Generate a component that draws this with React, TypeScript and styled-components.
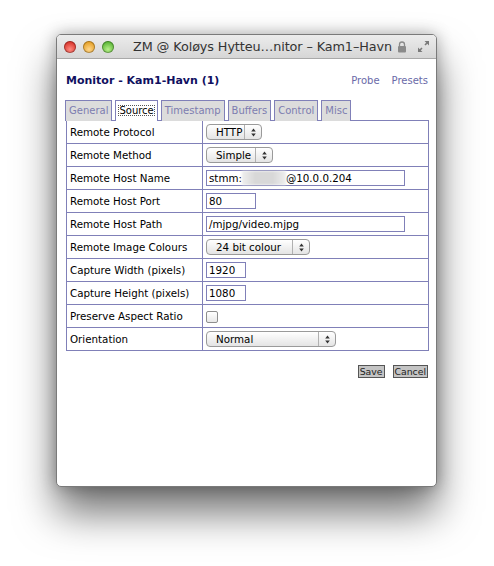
import React from "react";
import styled, { createGlobalStyle } from "styled-components";

const GlobalStyle = createGlobalStyle`
    html, body {
        margin: 0;
        padding: 0;
        background: #ffffff;
    }
`;

const Page = styled.div`
    width: 494px;
    height: 566px;
    padding: 34px 0 0 56px;
    box-sizing: border-box;
`;

const Window = styled.div`
    width: 381px;
    height: 453px;
    background: #ffffff;
    border: 1px solid #7a7a7a;
    border-radius: 5px;
    box-sizing: border-box;
    overflow: hidden;
    box-shadow: 0 26px 40px rgba(0, 0, 0, 0.55), 0 0 16px rgba(0, 0, 0, 0.3);
    display: flex;
    flex-direction: column;
`;

const TitleBar = styled.div`
    height: 23px;
    flex: none;
    display: flex;
    align-items: center;
    padding: 0 6px 0 7px;
    background: linear-gradient(#ececec, #d6d6d6);
    border-bottom: 1px solid #a9a9a9;
    font-family: "DejaVu Sans", sans-serif;
    font-size: 12.8px;
    color: #333;
`;

const Lights = styled.div`
    display: flex;
    gap: 7px;
`;

const Light = styled.span<{ $c: string; $d: string }>`
    width: 12px;
    height: 12px;
    border-radius: 50%;
    background: radial-gradient(circle at 50% 70%, ${p => p.$c} 0%, ${p => p.$d} 80%);
    box-shadow: inset 0 0 0 1px rgba(0, 0, 0, 0.28);
`;

const Title = styled.div`
    flex: 1;
    text-align: center;
    margin-left: 14px;
    white-space: nowrap;
    letter-spacing: -0.1px;
`;

const Content = styled.div`
    padding: 15px 8px 0 9px;
    font-family: "DejaVu Sans", Verdana, sans-serif;
    font-size: 10.3px;
`;

const HeadRow = styled.div`
    display: flex;
    align-items: baseline;
    justify-content: space-between;
    height: 20px;
`;

const Heading = styled.h2`
    margin: 0;
    font-size: 11px;
    font-weight: bold;
    color: #101060;
`;

const Links = styled.div`
    display: flex;
    gap: 12px;
`;

const Link = styled.a`
    color: #6a6aa8;
    font-size: 10px;
    text-decoration: none;
`;

const Tabs = styled.ul`
    display: flex;
    gap: 3px;
    list-style: none;
    margin: 6px 0 0 -1px;
    padding: 0;
    height: 20px;
`;

const Tab = styled.li<{ $active?: boolean }>`
    border: 1px solid #8080b8;
    border-bottom: none;
    background: ${p => (p.$active ? "#ffffff" : "#dcdcdc")};
    color: ${p => (p.$active ? "#000" : "#7c7cb0")};
    font-size: 10px;
    padding: 2px 2px 0 2px;
    height: 18px;
    box-sizing: content-box;
    line-height: 15px;
    span {
        outline: ${p => (p.$active ? "1px dotted #555" : "none")};
        outline-offset: -1px;
        padding: 0 1px;
    }
`;

const Table = styled.table`
    border-collapse: collapse;
    width: 363px;
    td {
        border: 1px solid #8080b8;
        height: 22px;
        padding: 0 3px;
        vertical-align: middle;
    }
    td:first-child {
        width: 129px;
    }
`;

const TextInput = styled.div<{ $w: number }>`
    width: ${p => p.$w}px;
    height: 16px;
    box-sizing: border-box;
    border: 1px solid #8080b8;
    padding: 0 2px;
    line-height: 14px;
    display: flex;
    align-items: center;
    white-space: nowrap;
`;

const Blur = styled.span`
    display: inline-block;
    width: 44px;
    height: 14px;
    background: linear-gradient(90deg, #eee, #d8d8d8 30%, #d8d8d8 70%, #eee);
    filter: blur(1px);
`;

const Select = styled.div<{ $w: number }>`
    width: ${p => p.$w}px;
    height: 16px;
    box-sizing: border-box;
    border: 1px solid #9a9a9a;
    border-radius: 4px;
    background: linear-gradient(#ffffff, #e4e4e4);
    display: flex;
    align-items: center;
    padding-left: 9px;
`;

const SelectLabel = styled.span`
    flex: 1;
`;

const Arrows = styled.span`
    width: 16px;
    height: 100%;
    border-left: 1px solid #b0b0b0;
    display: flex;
    align-items: center;
    justify-content: center;
`;

const Check = styled.span`
    display: inline-block;
    width: 10px;
    height: 10px;
    border: 1px solid #8e8e8e;
    border-radius: 2px;
    background: linear-gradient(#fff, #e8e8e8);
    vertical-align: middle;
`;

const Actions = styled.div`
    display: flex;
    justify-content: flex-end;
    gap: 8px;
    margin-top: 14px;
`;

const Button = styled.button`
    font-family: "DejaVu Sans", Verdana, sans-serif;
    font-size: 9.3px;
    color: #222;
    background: #c4c4c4;
    border: 1px solid #555;
    height: 13px;
    padding: 0 1px;
    line-height: 11px;
`;

function UpDown() {
    return (
        <Arrows>
            <svg width="5" height="9" viewBox="0 0 5 9">
                <path d="M2.5 0.5 L4.8 3.5 H0.2 Z M2.5 8.5 L4.8 5.5 H0.2 Z" fill="#333" />
            </svg>
        </Arrows>
    );
}

function Sel(props: { w: number; label: string }) {
    return (
        <Select $w={props.w}>
            <SelectLabel>{props.label}</SelectLabel>
            <UpDown />
        </Select>
    );
}

const rows: [string, React.ReactNode][] = [
    ["Remote Protocol", <Sel w={56} label="HTTP" />],
    ["Remote Method", <Sel w={67} label="Simple" />],
    [
        "Remote Host Name",
        <TextInput $w={199}>
            stmm:<Blur />@10.0.0.204
        </TextInput>,
    ],
    ["Remote Host Port", <TextInput $w={50}>80</TextInput>],
    ["Remote Host Path", <TextInput $w={199}>/mjpg/video.mjpg</TextInput>],
    ["Remote Image Colours", <Sel w={104} label="24 bit colour" />],
    ["Capture Width (pixels)", <TextInput $w={40}>1920</TextInput>],
    ["Capture Height (pixels)", <TextInput $w={40}>1080</TextInput>],
    ["Preserve Aspect Ratio", <Check />],
    ["Orientation", <Sel w={130} label="Normal" />],
];

export default function App() {
    return (
        <Page>
            <GlobalStyle />
            <Window>
                <TitleBar>
                    <Lights>
                        <Light $c="#ff8a80" $d="#d42a22" />
                        <Light $c="#ffd68a" $d="#e29a1c" />
                        <Light $c="#b8f08a" $d="#4fae2c" />
                    </Lights>
                    <Title>ZM @ Koløys Hytteu…nitor – Kam1–Havn</Title>
                    <svg width="10" height="12" viewBox="0 0 10 12" style={{ marginRight: 10 }}>
                        <path d="M2.5 5 V3.5 a2.5 2.5 0 0 1 5 0 V5" fill="none" stroke="#8a8a8a" strokeWidth="1.3" />
                        <rect x="1" y="5" width="8" height="6.5" rx="1" fill="#8a8a8a" />
                    </svg>
                    <svg width="13" height="13" viewBox="0 0 13 13">
                        <path d="M7.5 1 H12 V5.5 Z M1 7.5 V12 H5.5 Z" fill="#7a7a7a" />
                        <path d="M11 2 L8 5 M2 11 L5 8" stroke="#7a7a7a" strokeWidth="1.6" />
                    </svg>
                </TitleBar>
                <Content>
                    <HeadRow>
                        <Heading>Monitor - Kam1-Havn (1)</Heading>
                        <Links>
                            <Link href="#">Probe</Link>
                            <Link href="#">Presets</Link>
                        </Links>
                    </HeadRow>
                    <Tabs>
                        <Tab><span>General</span></Tab>
                        <Tab $active><span>Source</span></Tab>
                        <Tab><span>Timestamp</span></Tab>
                        <Tab><span>Buffers</span></Tab>
                        <Tab><span>Control</span></Tab>
                        <Tab><span>Misc</span></Tab>
                    </Tabs>
                    <Table>
                        <tbody>
                            {rows.map(([label, field]) => (
                                <tr key={label}>
                                    <td>{label}</td>
                                    <td>{field}</td>
                                </tr>
                            ))}
                        </tbody>
                    </Table>
                    <Actions>
                        <Button>Save</Button>
                        <Button>Cancel</Button>
                    </Actions>
                </Content>
            </Window>
        </Page>
    );
}
